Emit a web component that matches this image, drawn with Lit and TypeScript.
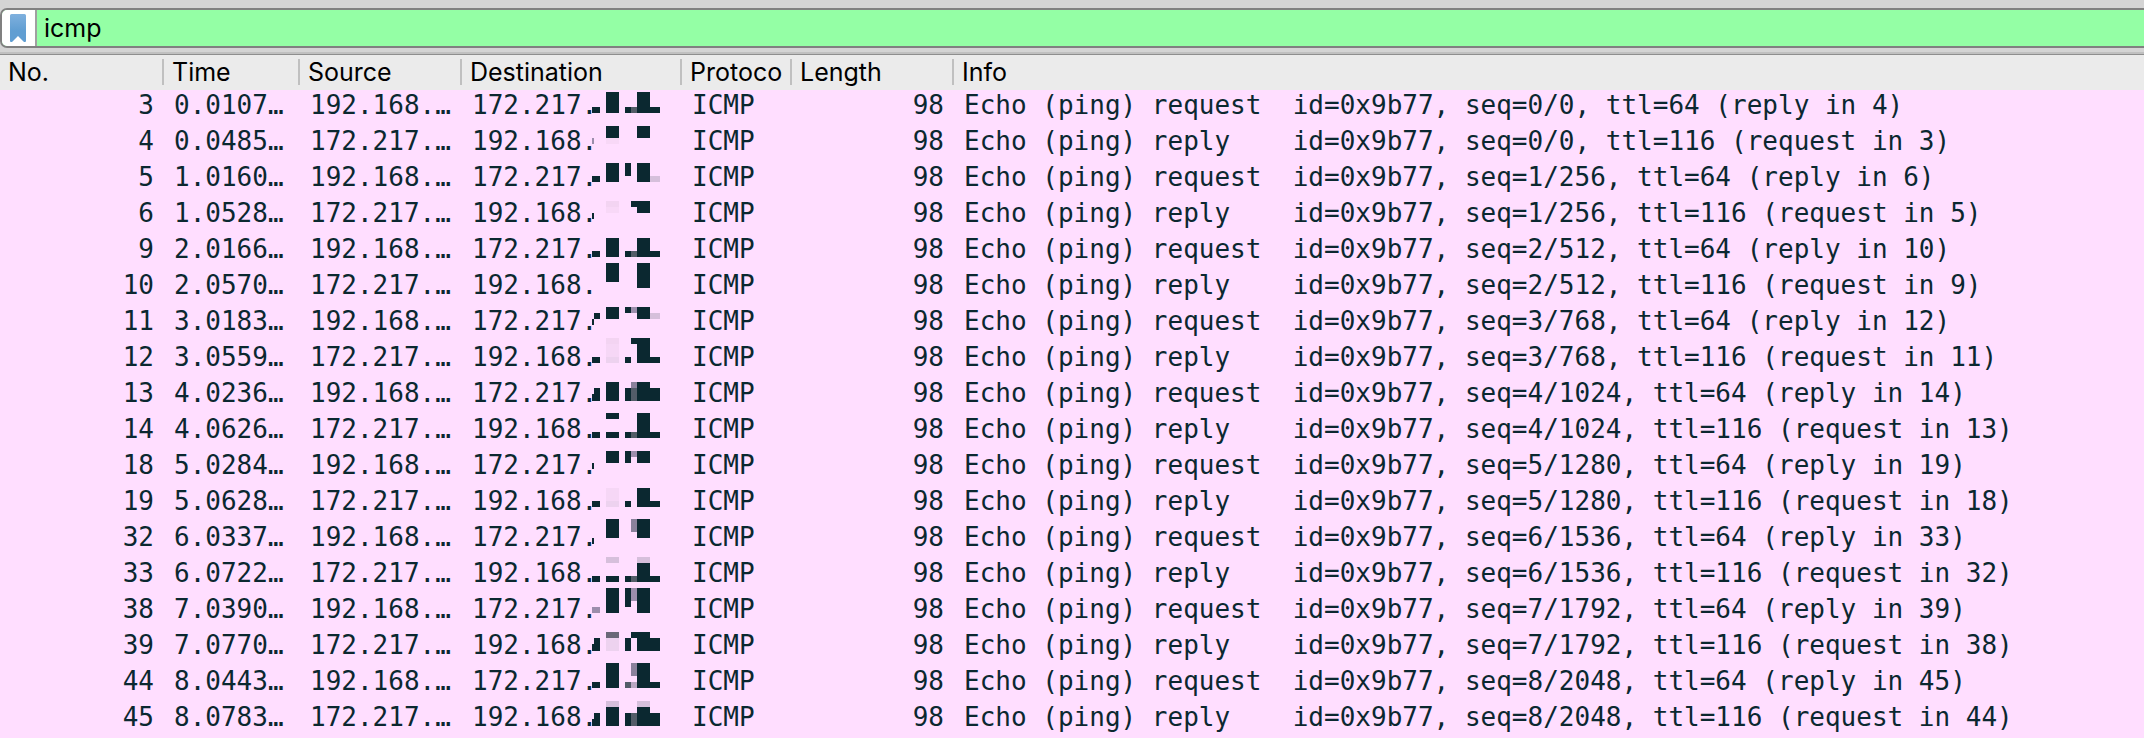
import { LitElement, html, svg, css } from "lit";
import { customElement } from "lit/decorators.js";

type Block = [x: number, y: number, w: number, h: number, tone?: string];

interface Packet {
  no: number;
  time: string;
  outgoing: boolean;
  seq: string;
  peer: number;
  mask: Block[];
}

const M = "#6a6878";
const D = "#535c68";
const L = "#9c8eac";
const P = "#d6bfdb";
const F = "#f3d4f2";
const G = "#edd2ef";

const PACKETS: Packet[] = [
  { no: 3, time: "0.0107…", outgoing: true, seq: "0/0", peer: 4, mask: [[0, 17, 8, 6], [14, 2, 13, 21], [33, 17, 6, 6], [39, 17, 6, 6, D], [45, 2, 13, 21], [58, 17, 10, 6]] },
  { no: 4, time: "0.0485…", outgoing: false, seq: "0/0", peer: 3, mask: [[0, 12, 2, 6, L], [14, 0, 13, 12], [14, 12, 13, 6, "#f8d8f7"], [45, 0, 13, 12]] },
  { no: 5, time: "1.0160…", outgoing: true, seq: "1/256", peer: 6, mask: [[0, 14, 8, 6], [14, 1, 13, 19], [33, 1, 6, 13], [45, 1, 13, 19], [58, 14, 10, 6, P]] },
  { no: 6, time: "1.0528…", outgoing: false, seq: "1/256", peer: 5, mask: [[0, 15, 2, 6], [14, 3, 13, 6, F], [14, 9, 13, 6, "#f8d8f7"], [39, 3, 19, 6], [45, 9, 13, 6]] },
  { no: 9, time: "2.0166…", outgoing: true, seq: "2/512", peer: 10, mask: [[0, 17, 8, 6], [14, 4, 13, 19], [33, 17, 6, 6], [39, 17, 6, 6, D], [45, 4, 13, 19], [58, 17, 10, 6]] },
  { no: 10, time: "2.0570…", outgoing: false, seq: "2/512", peer: 9, mask: [[14, -7, 13, 19], [45, -7, 13, 25]] },
  { no: 11, time: "3.0183…", outgoing: true, seq: "3/768", peer: 12, mask: [[2, 7, 6, 6], [0, 13, 2, 6], [14, 1, 13, 12], [33, 1, 6, 6], [39, 1, 6, 6, L], [45, 1, 13, 12], [58, 7, 10, 6, P]] },
  { no: 12, time: "3.0559…", outgoing: false, seq: "3/768", peer: 11, mask: [[0, 15, 8, 6], [14, -4, 13, 6, F], [14, 2, 13, 13, "#f6d7f6"], [14, 15, 13, 6, G], [33, 15, 6, 6], [39, -4, 6, 6], [45, -4, 13, 25], [58, 15, 10, 6]] },
  { no: 13, time: "4.0236…", outgoing: true, seq: "4/1024", peer: 14, mask: [[2, 10, 6, 6], [0, 16, 8, 7], [14, 4, 13, 19], [33, 10, 6, 13], [39, 4, 6, 6, "#8a819b"], [39, 10, 6, 13, D], [45, 4, 13, 19], [58, 10, 10, 13]] },
  { no: 14, time: "4.0626…", outgoing: false, seq: "4/1024", peer: 13, mask: [[0, 18, 8, 6], [14, -1, 13, 6], [14, 18, 13, 6], [33, 18, 6, 6], [39, 18, 6, 6, D], [45, -1, 13, 25], [58, 18, 10, 6]] },
  { no: 18, time: "5.0284…", outgoing: true, seq: "5/1280", peer: 19, mask: [[0, 13, 2, 6], [14, 1, 13, 12], [33, 1, 6, 12], [39, 1, 6, 6, L], [45, 1, 13, 12]] },
  { no: 19, time: "5.0628…", outgoing: false, seq: "5/1280", peer: 18, mask: [[0, 15, 8, 6], [14, 2, 13, 13, "#f6d7f6"], [14, 15, 13, 6, G], [33, 15, 6, 6], [45, 2, 13, 19], [58, 15, 10, 6]] },
  { no: 32, time: "6.0337…", outgoing: true, seq: "6/1536", peer: 33, mask: [[0, 16, 2, 6], [14, -3, 13, 19], [39, -3, 6, 13, "#8a819b"], [45, -3, 13, 19]] },
  { no: 33, time: "6.0722…", outgoing: false, seq: "6/1536", peer: 32, mask: [[0, 18, 8, 6], [14, -1, 13, 6, P], [14, 18, 13, 6], [33, 18, 6, 6], [39, 18, 6, 6, D], [45, -1, 13, 6, P], [45, 5, 13, 19], [58, 18, 10, 6]] },
  { no: 38, time: "7.0390…", outgoing: true, seq: "7/1792", peer: 39, mask: [[0, 13, 8, 6, L], [14, -6, 13, 25], [33, -6, 6, 19], [39, -6, 6, 13, L], [45, -6, 13, 25]] },
  { no: 39, time: "7.0770…", outgoing: false, seq: "7/1792", peer: 38, mask: [[2, 8, 6, 6], [0, 14, 8, 7], [14, 2, 13, 6, M], [14, 8, 13, 13, G], [33, 8, 6, 13], [39, 2, 6, 6], [45, 2, 13, 19], [58, 8, 10, 13]] },
  { no: 44, time: "8.0443…", outgoing: true, seq: "8/2048", peer: 45, mask: [[0, 16, 8, 6], [14, -3, 13, 25], [33, 16, 6, 6, D], [39, -3, 6, 13, "#8a819b"], [39, 16, 6, 6, "#b9a6c2"], [45, -3, 13, 25], [58, 16, 10, 6]] },
  { no: 45, time: "8.0783…", outgoing: false, seq: "8/2048", peer: 44, mask: [[2, 11, 6, 6], [0, 17, 8, 7], [14, -1, 13, 6, P], [14, 5, 13, 19], [33, 11, 6, 13], [39, 11, 6, 13, D], [45, -1, 13, 6, P], [45, 5, 13, 19], [58, 11, 10, 13]] },
];

const HEADINGS = ["No.", "Time", "Source", "Destination", "Protoco", "Length", "Info"];

@customElement("app-root")
export class AppRoot extends LitElement {
  static styles = css`
    :host {
      display: block;
      min-height: 100vh;
      background: #ffdeff;
      color: #0b2830;
    }
    .toolbar {
      background: #d4d4d4;
      padding: 8px 0 4px;
    }
    .filter {
      display: flex;
      box-sizing: border-box;
      height: 40px;
      border: 2px solid #808080;
      border-right: 0;
      border-radius: 7px 0 0 7px;
      background: #94ffa5;
      overflow: hidden;
    }
    .bookmark {
      display: flex;
      align-items: center;
      box-sizing: border-box;
      width: 35px;
      padding: 0 0 0 8px;
      border: 0;
      border-right: 2px solid #a0a0a0;
      background: #ffffff;
    }
    .expression {
      flex: 1;
      min-width: 0;
      padding: 0 7px;
      border: 0;
      outline: 0;
      background: transparent;
      color: #000000;
      font: 25px/36px Inter, "Liberation Sans", sans-serif;
    }
    .edge {
      height: 2px;
      background: #c0c0c0;
      border-bottom: 1px solid #8e8e8e;
    }
    .packets {
      width: 100%;
      table-layout: fixed;
      border-collapse: collapse;
      font: 26px/30px "DejaVu Sans Mono", monospace;
    }
    .c-source,
    .c-length { width: 162px; }
    .c-no { width: 164px; }
    .c-time { width: 136px; }
    .c-destination { width: 220px; }
    .c-protocol { width: 110px; }
    .head {
      background: #ebebeb;
      color: #000000;
      font: 25px/26px Inter, "Liberation Sans", sans-serif;
    }
    .head th {
      padding: 4px 0 5px;
      font-weight: 400;
      text-align: left;
    }
    .label {
      display: block;
      padding-left: 8px;
      border-right: 2px solid #c0c0c0;
      white-space: nowrap;
    }
    .head th:last-child .label { border-right: 0; }
    .row td {
      padding: 0 0 6px 10px;
      white-space: pre;
    }
    .row .number {
      padding: 0 10px 6px 0;
      text-align: right;
    }
    .address { display: flex; }
    .mask {
      flex: none;
      margin-left: -5px;
      overflow: visible;
    }
  `;

  private row(p: Packet) {
    const local = "192.168.";
    const remote = "172.217.";
    const info = p.outgoing
      ? `Echo (ping) request  id=0x9b77, seq=${p.seq}, ttl=64 (reply in ${p.peer})`
      : `Echo (ping) reply    id=0x9b77, seq=${p.seq}, ttl=116 (request in ${p.peer})`;
    return html`<tr class="row">
      <td class="number">${p.no}</td>
      <td>${p.time}</td>
      <td>${p.outgoing ? local : remote}…</td>
      <td><div class="address"><span>${p.outgoing ? remote : local}</span><svg class="mask" width="68" height="30" shape-rendering="crispEdges" aria-hidden="true">${p.mask.map(
        ([x, y, w, h, tone]) => svg`<rect x=${x} y=${y} width=${w} height=${h} fill=${tone ?? "#0b2830"}></rect>`
      )}</svg></div></td>
      <td>ICMP</td>
      <td class="number">98</td>
      <td>${info}</td>
    </tr>`;
  }

  render() {
    return html`
      <div class="toolbar">
        <div class="filter">
          <button class="bookmark" type="button" aria-label="Bookmarks">
            <svg width="16" height="28" viewBox="0 0 16 28" aria-hidden="true">
              <defs>
                <linearGradient id="ribbon" x1="0" y1="0" x2="0" y2="1">
                  <stop offset="0" stop-color="#7fb0de"></stop>
                  <stop offset="0.6" stop-color="#609ed2"></stop>
                  <stop offset="1" stop-color="#609ed2"></stop>
                </linearGradient>
              </defs>
              <path d="M1.5 0H14.500Q16 0 16 1.500V27Q16 28 15 28H14L8 22L2 28H1Q0 28 0 27V1.500Q0 0 1.500 0Z" fill="url(#ribbon)"></path>
            </svg>
          </button>
          <input class="expression" type="text" aria-label="Display filter" spellcheck="false" .value=${"icmp"} />
        </div>
      </div>
      <div class="edge"></div>
      <table class="packets">
        <colgroup>
          <col class="c-no" /><col class="c-time" /><col class="c-source" /><col class="c-destination" />
          <col class="c-protocol" /><col class="c-length" /><col />
        </colgroup>
        <thead class="head">
          <tr>${HEADINGS.map((h) => html`<th scope="col"><span class="label">${h}</span></th>`)}</tr>
        </thead>
        <tbody>${PACKETS.map((p) => this.row(p))}</tbody>
      </table>
    `;
  }
}
